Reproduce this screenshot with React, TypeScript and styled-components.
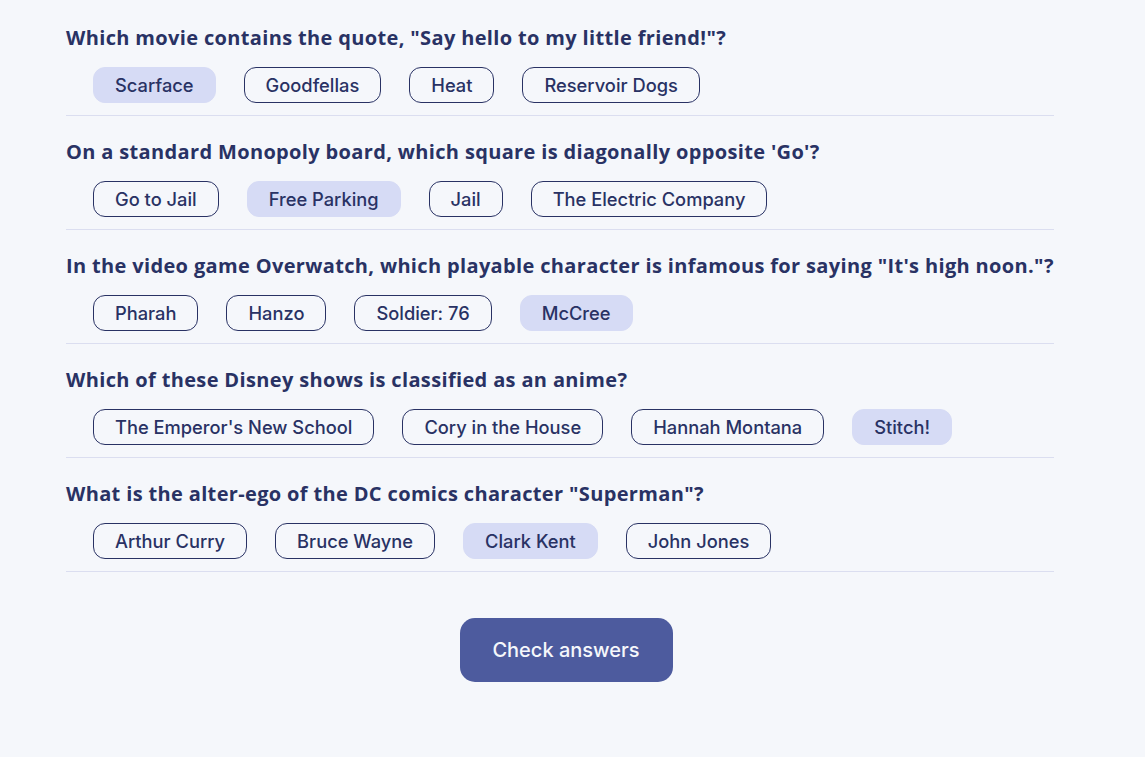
import React, { useState } from "react";
import styled, { createGlobalStyle } from "styled-components";

const questions = [
  {
    id: 1,
    text: 'Which movie contains the quote, "Say hello to my little friend!"?',
    answers: ["Scarface", "Goodfellas", "Heat", "Reservoir Dogs"],
    picked: 0,
  },
  {
    id: 2,
    text: "On a standard Monopoly board, which square is diagonally opposite 'Go'?",
    answers: ["Go to Jail", "Free Parking", "Jail", "The Electric Company"],
    picked: 1,
  },
  {
    id: 3,
    text: 'In the video game Overwatch, which playable character is infamous for saying "It\'s high noon."?',
    answers: ["Pharah", "Hanzo", "Soldier: 76", "McCree"],
    picked: 3,
  },
  {
    id: 4,
    text: "Which of these Disney shows is classified as an anime?",
    answers: ["The Emperor's New School", "Cory in the House", "Hannah Montana", "Stitch!"],
    picked: 3,
  },
  {
    id: 5,
    text: 'What is the alter-ego of the DC comics character "Superman"?',
    answers: ["Arthur Curry", "Bruce Wayne", "Clark Kent", "John Jones"],
    picked: 2,
  },
];

export default function App() {
  const [picks, setPicks] = useState(questions.map((q) => q.picked));

  const pick = (qi: number, ai: number) => {
    setPicks((prev) => prev.map((p, i) => (i === qi ? ai : p)));
  };

  return (
    <>
      <GlobalStyle />
      <StyledPage>
        {questions.map((q, qi) => (
          <StyledQuestion key={q.id}>
            <StyledTitle>{q.text}</StyledTitle>
            <StyledAnswers>
              {q.answers.map((a, ai) => (
                <StyledAnswer key={a} $selected={picks[qi] === ai} onClick={() => pick(qi, ai)}>
                  {a}
                </StyledAnswer>
              ))}
            </StyledAnswers>
          </StyledQuestion>
        ))}
        <StyledFooter>
          <StyledCheck>Check answers</StyledCheck>
        </StyledFooter>
      </StyledPage>
    </>
  );
}

const GlobalStyle = createGlobalStyle`
  body {
    margin: 0;
    background: #f5f7fb;
    font-family: Inter, "Liberation Sans", sans-serif;
    color: #293264;
  }
`;

const StyledPage = styled.main`
  width: 988px;
  padding: 26px 0 40px 66px;
`;

const StyledQuestion = styled.section`
  border-bottom: 1px solid #dbdef0;
  padding-bottom: 12px;
  margin-bottom: 24px;
`;

const StyledTitle = styled.h2`
  margin: 0 0 17px;
  font-family: "Open Sans", sans-serif;
  font-size: 20px;
  line-height: 24px;
  font-weight: 700;
  letter-spacing: 0.35px;
  white-space: nowrap;
  color: #293264;
`;

const StyledAnswers = styled.div`
  display: flex;
  gap: 28px;
  padding-left: 27px;
`;

const StyledAnswer = styled.button<{ $selected: boolean }>`
  height: 36px;
  padding: 0 21px;
  border-radius: 12px;
  border: 1px solid ${({ $selected }) => ($selected ? "#d6dbf5" : "#293264")};
  background: ${({ $selected }) => ($selected ? "#d6dbf5" : "transparent")};
  color: #293264;
  font-family: Inter, sans-serif;
  font-size: 18.3px;
  font-weight: 500;
  cursor: pointer;
`;

const StyledFooter = styled.div`
  display: flex;
  justify-content: center;
  padding: 22px 0 0 12px;
`;

const StyledCheck = styled.button`
  width: 213px;
  height: 64px;
  border: 0;
  border-radius: 15px;
  background: #4d5b9e;
  color: #f5f7fb;
  font-family: Inter, sans-serif;
  font-size: 20px;
  font-weight: 500;
  cursor: pointer;
`;
